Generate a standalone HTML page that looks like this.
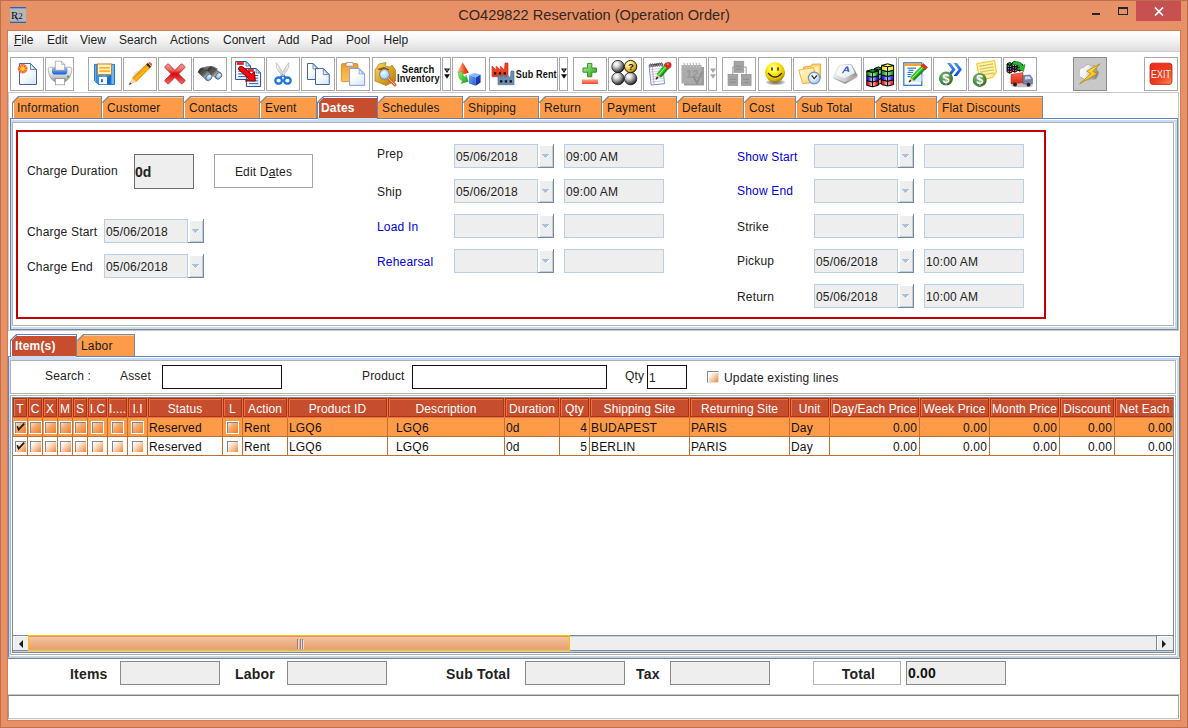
<!DOCTYPE html>
<html lang="en"><head><meta charset="utf-8"><title>CO429822 Reservation (Operation Order)</title>
<style>
*{box-sizing:border-box;margin:0;padding:0}
html,body{width:1188px;height:728px;overflow:hidden;background:#E89166}
body{font-family:"Liberation Sans",Arial,sans-serif;font-size:12px;color:#222;position:relative;letter-spacing:0.18px}
.a{position:absolute}
.t{position:absolute;white-space:nowrap;line-height:14px;height:14px}
#win{position:absolute;left:0;top:0;width:1188px;height:728px;background:#E89166;border:1px solid #B9714E}
#title{position:absolute;left:0;top:5.2px;width:1188px;text-align:center;font-size:14.6px;line-height:20px;color:#33271f;letter-spacing:0px}
#content{position:absolute;left:8px;top:31px;width:1172px;height:689px;background:#fff}
#menubar{position:absolute;left:0;top:0;width:1172px;height:21px;background:linear-gradient(#ffffff 0%,#f2f2f2 50%,#dedede 100%);border-bottom:1px solid #cdcdcd}
#menubar span{position:absolute;top:2px;line-height:14px;color:#222;font-size:12px;letter-spacing:0}
.tb{position:absolute;top:57px;height:34px;border:1px solid #a8a8a8;background:#fff;overflow:hidden}
.tb svg{position:absolute;left:0;top:0}
.tab{position:absolute;height:22px}
.tab svg{position:absolute;left:0;top:0}
.tab span{position:absolute;left:5px;top:5px;line-height:14px;white-space:nowrap;color:#1c1c1c}
.tab.sel span{color:#fff;font-weight:bold;left:4px}
.fld{position:absolute;height:24px;background:#eeeeee;border:1px solid #b8cfe5;line-height:25px;padding-left:1px;color:#222;white-space:nowrap;overflow:hidden}
.dd{position:absolute;width:16px;height:24px;background:#eeeeee;box-shadow:inset -1px -1px 0 #7a8a99,inset 2px 2px 0 #fff,inset -2px -2px 0 #b8cfe5}
.dd:after{content:"";position:absolute;left:7px;top:13px;width:1px;height:1px;background:#a9c1df;box-shadow:-3px -3px 0 #a9c1df,-2px -3px 0 #a9c1df,-1px -3px 0 #a9c1df,0px -3px 0 #a9c1df,1px -3px 0 #a9c1df,2px -3px 0 #a9c1df,3px -3px 0 #a9c1df,-2px -2px 0 #a9c1df,-1px -2px 0 #a9c1df,0px -2px 0 #a9c1df,1px -2px 0 #a9c1df,2px -2px 0 #a9c1df,-1px -1px 0 #a9c1df,0px -1px 0 #a9c1df,1px -1px 0 #a9c1df,3px -2px 0 #fff,2px -1px 0 #fff,1px 0px 0 #fff,0px 1px 0 #fff}
.lbl{position:absolute;white-space:nowrap;line-height:14px;color:#222}
.blue{color:#0000e0}
.gbox{position:absolute;background:#eeeeee;border:1px solid #8a8a8a}
.hc{position:absolute;top:0;height:19px;letter-spacing:0.08px;background:#c64d2e;border:1px solid #9a3a22;box-shadow:inset 1px 1px 0 #ff6b35;color:#fff;text-align:center;line-height:20px;white-space:nowrap;overflow:hidden}
.row{position:absolute;left:0;width:1165px;height:19px;border-bottom:1px solid #c07030}
.cell{position:absolute;top:0;height:18px;line-height:20px;white-space:nowrap;overflow:hidden;border-right:1px solid #c07030;color:#111}
.cb{position:absolute;width:13px;height:13px;border:1px solid #fff;background:linear-gradient(135deg,#ffffff 18%,#fbd3b0 52%,#f0843f 100%);box-shadow:inset 1px 1px 0 #7a8a99}
.cbs{background:linear-gradient(135deg,#fde4cc 5%,#f8a868 45%,#ee7c30 100%)}
.cbp{border-color:#7a8a99 #dde4ec #dde4ec #7a8a99;box-shadow:inset 1px 1px 0 #fff}
</style></head><body>
<div id="win"></div>
<div class="a" style="left:7px;top:30px;width:1174px;height:691px;border:1px solid #cf7c55"></div>
<div class="a" style="left:10px;top:7px;width:16px;height:16px"><svg width="16" height="16" viewBox="0 0 16 16"><rect width="16" height="16" fill="#b4b8bc"/><rect width="16" height="1.3" fill="#2b62b8"/><rect y="14.7" width="16" height="1.3" fill="#2b62b8"/><text x="1" y="11.5" font-family="Liberation Serif,serif" font-size="11" fill="#111">R</text><text x="8.3" y="11.5" font-family="Liberation Serif,serif" font-size="9" fill="#111">2</text><path d="M5 10 L8 13.5" stroke="#111" stroke-width="0.9"/></svg></div>
<div id="title">CO429822 Reservation (Operation Order)</div>
<div class="a" style="left:1092px;top:13px;width:8px;height:2px;background:#1e2630"></div>
<div class="a" style="left:1118px;top:7px;width:10px;height:8px;border:1px solid #1e2630;border-top-width:2px"></div>
<div class="a" style="left:1136px;top:1px;width:45px;height:20px;background:#c75050"></div>
<svg class="a" style="left:1154px;top:7px" width="10" height="9" viewBox="0 0 10 9"><path d="M1 0.5 L9 8.5 M9 0.5 L1 8.5" stroke="#fff" stroke-width="1.7" fill="none"/></svg>
<div id="content">
<div id="menubar"><span style="left:6px"><u>F</u>ile</span><span style="left:39px">Edit</span><span style="left:72px">View</span><span style="left:111px">Search</span><span style="left:162px">Actions</span><span style="left:215px">Convert</span><span style="left:270px">Add</span><span style="left:303px">Pad</span><span style="left:338px">Pool</span><span style="left:375.5px">Help</span></div>
</div>
<div class="a" style="left:8px;top:92px;width:1171px;height:239px;border:1px solid #c6c6c6"></div>
<div class="tb" style="left:10px;width:34px;background:#fff"><svg width="32" height="32" viewBox="0 0 32 32"><defs><linearGradient id="g2" x1="0.2" y1="0" x2="0.8" y2="1"><stop offset="0" stop-color="#ffffff"/><stop offset="0.45" stop-color="#fbfdff"/><stop offset="1" stop-color="#d6e8f8"/></linearGradient></defs><path d="M8.5 5.5 L19.5 5.5 L25.5 11.5 L25.5 26.5 L8.5 26.5 Z" fill="url(#g2)" stroke="#4a6396" stroke-width="1"/><path d="M19.5 5.5 L19.5 11.5 L25.5 11.5 Z" fill="#8fc6ee" stroke="#4a6396" stroke-width="0.7" stroke-linejoin="round"/><path d="M20.1 7.1 L20.1 10.9 L22.9 10.9 Z" fill="#e8f4fc"/><defs><radialGradient id="g1" cx="0.5" cy="0.5" r="0.5"><stop offset="0" stop-color="#ffe838"/><stop offset="0.3" stop-color="#ffc810"/><stop offset="0.5" stop-color="#f85820"/><stop offset="0.8" stop-color="rgba(245,70,40,0.75)"/><stop offset="1" stop-color="rgba(255,90,60,0)"/></radialGradient></defs><circle cx="11.7" cy="10.7" r="5.4" fill="url(#g1)"/><path d="M13.6 11.3 L15.7 11.9" stroke="#ffe060" stroke-width="0.7"/><path d="M12.6 12.5 L13.7 14.4" stroke="#ffe060" stroke-width="0.7"/><path d="M11.1 12.6 L10.5 14.7" stroke="#ffe060" stroke-width="0.7"/><path d="M9.9 11.6 L8.0 12.7" stroke="#ffe060" stroke-width="0.7"/><path d="M9.8 10.1 L7.7 9.5" stroke="#ffe060" stroke-width="0.7"/><path d="M10.8 8.9 L9.7 7.0" stroke="#ffe060" stroke-width="0.7"/><path d="M12.3 8.8 L12.9 6.7" stroke="#ffe060" stroke-width="0.7"/><path d="M13.5 9.8 L15.4 8.7" stroke="#ffe060" stroke-width="0.7"/></svg></div>
<div class="tb" style="left:45px;width:29px;background:#fff"><svg width="27" height="32" viewBox="0 0 27 32"><defs><linearGradient id="g3" x1="0" y1="0" x2="0" y2="1"><stop offset="0" stop-color="#ffffff"/><stop offset="0.35" stop-color="#ececec"/><stop offset="0.7" stop-color="#c4c6c8"/><stop offset="1" stop-color="#7c7e82"/></linearGradient><linearGradient id="g4" x1="0" y1="0" x2="0" y2="1"><stop offset="0" stop-color="#9cc8ff"/><stop offset="0.45" stop-color="#5a98f0"/><stop offset="1" stop-color="#1458d8"/></linearGradient></defs><path d="M2.2 11 Q2 9.3 4 9.2 L24 9.2 Q26 9.3 25.8 11 Q25.5 20 19.5 23.6 L8.5 23.6 Q2.5 20 2.2 11 Z" fill="url(#g3)" stroke="#8c8e92" stroke-width="0.6"/><path d="M6 9.4 L21.4 9.4 L21.4 13.5 Q21.4 16.6 18 16.6 L9.4 16.6 Q6 16.6 6 13.5 Z" fill="url(#g4)"/><rect x="8.6" y="9.4" width="10.6" height="3.6" fill="#8c8ea0"/><path d="M9.3 12.2 L9.3 3.2 L15.4 3.2 L18.7 6.5 L18.7 12.2 Z" fill="#fdfdfd" stroke="#9a9a9a" stroke-width="0.7"/><path d="M15.4 3.2 L15.4 6.5 L18.7 6.5 Z" fill="#e4e4e4" stroke="#9a9a9a" stroke-width="0.5"/><circle cx="22.1" cy="18.7" r="1.1" fill="#22a832"/><rect x="9.3" y="20.6" width="9.4" height="6.2" fill="#ffffff" stroke="#8a8a8a" stroke-width="0.7"/></svg></div>
<div class="tb" style="left:88px;width:34px;background:#fff"><svg width="32" height="32" viewBox="0 0 32 32"><defs><linearGradient id="g5" x1="0" y1="0" x2="1" y2="0"><stop offset="0" stop-color="#bfe4fa"/><stop offset="0.08" stop-color="#2c8ce0"/><stop offset="0.5" stop-color="#4aa8f0"/><stop offset="0.8" stop-color="#1a74d0"/><stop offset="0.93" stop-color="#8fd0f8"/><stop offset="1" stop-color="#1a74d0"/></linearGradient></defs><path d="M5.5 6.4 L25.5 6.4 L25.5 26.5 L9.5 26.5 L5.5 22.8 Z" fill="url(#g5)" stroke="#1670c8" stroke-width="0.9" stroke-linejoin="round"/><rect x="8.5" y="6" width="14" height="10.6" fill="#fff2c4" stroke="#c8862a" stroke-width="1"/><rect x="10.3" y="9" width="10.4" height="1.7" fill="#ffae30"/><rect x="10.3" y="12.3" width="10.4" height="1.7" fill="#ffae30"/><rect x="10" y="19" width="8" height="7.2" fill="#f6fafe"/><rect x="12" y="21.2" width="1.9" height="3" fill="#1a62d0"/><rect x="18.2" y="19" width="2.8" height="7.2" fill="#1568c8"/></svg></div>
<div class="tb" style="left:123px;width:34px;background:#fff"><svg width="32" height="32" viewBox="0 0 32 32"><defs><linearGradient id="g6" x1="0" y1="0" x2="1" y2="1"><stop offset="0" stop-color="rgba(150,150,150,0)"/><stop offset="1" stop-color="rgba(120,120,120,0.55)"/></linearGradient></defs><path d="M5 26.8 L10 14 L16 12 L11 21 Z" fill="url(#g6)"/><path d="M8.4 20.4 L22.8 6 L26.3 9.5 L11.9 23.9 Z" fill="#ffa800"/><path d="M8.7 20.1 L23.1 5.7" stroke="#c87800" stroke-width="0.9"/><path d="M10.6 22.6 L25 8.2" stroke="#ffe070" stroke-width="1" stroke-dasharray="1 0.6"/><path d="M11.8 23.8 L26.2 9.4" stroke="#e89000" stroke-width="0.8"/><path d="M22.2 6.6 L23.8 5 L27.3 8.5 L25.7 10.1 Z" fill="#222"/><path d="M23.8 5 Q25.6 3.4 27.4 5 Q29 6.8 27.3 8.5 Z" fill="#f05828"/><path d="M25.6 6.8 L27 8.2" stroke="#ffd8d0" stroke-width="0.9"/><path d="M8.4 20.4 L11.9 23.9 L4.9 26.9 Z" fill="#f4c8a8"/><path d="M9.6 21.6 L5.8 26" stroke="#fff" stroke-width="0.8" opacity="0.8"/><path d="M4.9 26.9 L6 24.2 L7.7 25.8 Z" fill="#333"/></svg></div>
<div class="tb" style="left:158px;width:34px;background:#fff"><svg width="32" height="32" viewBox="0 0 32 32"><defs><linearGradient id="g7" x1="0" y1="0" x2="0" y2="1"><stop offset="0" stop-color="#f49a9a"/><stop offset="0.3" stop-color="#ec6868"/><stop offset="0.5" stop-color="#d80808"/><stop offset="0.62" stop-color="#e02020"/><stop offset="1" stop-color="#ee6a6a"/></linearGradient></defs><path d="M9.6 6 L15.9 12.3 L22.2 6 Q22.9 5.6 23.5 6.2 L25.7 8.4 Q26.2 9 25.8 9.7 L19.6 15.9 L25.8 22.1 Q26.2 22.8 25.7 23.4 L23.5 25.6 Q22.9 26.2 22.2 25.8 L15.9 19.5 L9.6 25.8 Q8.9 26.2 8.3 25.6 L6.1 23.4 Q5.6 22.8 6 22.1 L12.2 15.9 L6 9.7 Q5.6 9 6.1 8.4 L8.3 6.2 Q8.9 5.6 9.6 6 Z" fill="url(#g7)" stroke="#b82828" stroke-width="0.8" stroke-linejoin="round"/></svg></div>
<div class="tb" style="left:193px;width:34px;background:#fff"><svg width="32" height="32" viewBox="0 0 32 32"><defs><linearGradient id="g8" x1="0" y1="0" x2="1" y2="1"><stop offset="0" stop-color="#3a3a3a"/><stop offset="0.45" stop-color="#5a5a5a"/><stop offset="0.7" stop-color="#c8c8c8"/><stop offset="1" stop-color="#8a8a8a"/></linearGradient><radialGradient id="g9" cx="0.45" cy="0.35" r="0.7"><stop offset="0" stop-color="#e4f2ff"/><stop offset="0.5" stop-color="#a4cdf8"/><stop offset="1" stop-color="#5c98e8"/></radialGradient><linearGradient id="g10" x1="0" y1="0" x2="0" y2="1"><stop offset="0" stop-color="#8c8c8c"/><stop offset="1" stop-color="#3c3c3c"/></linearGradient></defs><path d="M8 9.5 L14 8 L20 8.5 L24 11 L18 14 L10 13 Z" fill="url(#g10)"/><path d="M4.3 14.5 L12.6 22.2 L17.2 16.4 L8.1 9.9 Z" fill="url(#g8)" stroke="#3a3a3a" stroke-width="0.6" stroke-linejoin="round"/><ellipse cx="6.2" cy="12.2" rx="1.3" ry="3.0" transform="rotate(39 6.2 12.2)" fill="#3c3c3c"/><ellipse cx="14.9" cy="19.3" rx="2.7" ry="3.7" transform="rotate(39 14.9 19.3)" fill="url(#g9)" stroke="#4a4a4a" stroke-width="0.7"/><path d="M13.7 13.1 L22.5 20.7 L26.9 15.1 L17.3 8.5 Z" fill="url(#g8)" stroke="#3a3a3a" stroke-width="0.6" stroke-linejoin="round"/><ellipse cx="15.5" cy="10.8" rx="1.3" ry="2.9" transform="rotate(38 15.5 10.8)" fill="#3c3c3c"/><ellipse cx="24.7" cy="17.9" rx="2.7" ry="3.6" transform="rotate(38 24.7 17.9)" fill="url(#g9)" stroke="#4a4a4a" stroke-width="0.7"/></svg></div>
<div class="tb" style="left:231px;width:34px;background:#fff"><svg width="32" height="32" viewBox="0 0 32 32"><defs><linearGradient id="g11" x1="0.2" y1="0" x2="0.8" y2="1"><stop offset="0" stop-color="#ffffff"/><stop offset="0.45" stop-color="#fbfdff"/><stop offset="1" stop-color="#d6e8f8"/></linearGradient></defs><path d="M3.6 3.5 L14.100000000000001 3.5 L18.6 8.0 L18.6 21.5 L3.6 21.5 Z" fill="url(#g11)" stroke="#2a4ea8" stroke-width="1"/><path d="M14.100000000000001 3.5 L14.100000000000001 8.0 L18.6 8.0 Z" fill="#8fc6ee" stroke="#2a4ea8" stroke-width="0.7" stroke-linejoin="round"/><path d="M14.700000000000001 5.1 L14.700000000000001 7.4 L16.0 7.4 Z" fill="#e8f4fc"/><rect x="4.8" y="4.1" width="7.000000000000002" height="2.8" fill="#f02010"/><path d="M6.1 10.5 L16.1 10.5" stroke="#3a5eb8" stroke-width="1"/><path d="M6.1 13.2 L16.1 13.2" stroke="#3a5eb8" stroke-width="1"/><path d="M6.1 15.9 L16.1 15.9" stroke="#3a5eb8" stroke-width="1"/><path d="M6.1 18.6 L16.1 18.6" stroke="#3a5eb8" stroke-width="1"/><defs><linearGradient id="g12" x1="0.2" y1="0" x2="0.8" y2="1"><stop offset="0" stop-color="#ffffff"/><stop offset="0.45" stop-color="#fbfdff"/><stop offset="1" stop-color="#d6e8f8"/></linearGradient></defs><path d="M14.4 10.5 L24.1 10.5 L28.6 15.0 L28.6 28.5 L14.4 28.5 Z" fill="url(#g12)" stroke="#2a4ea8" stroke-width="1"/><path d="M24.1 10.5 L24.1 15.0 L28.6 15.0 Z" fill="#8fc6ee" stroke="#2a4ea8" stroke-width="0.7" stroke-linejoin="round"/><path d="M24.700000000000003 12.1 L24.700000000000003 14.4 L26.0 14.4 Z" fill="#e8f4fc"/><rect x="15.6" y="11.1" width="6.200000000000001" height="2.8" fill="#f02010"/><path d="M16.9 17.5 L26.1 17.5" stroke="#3a5eb8" stroke-width="1"/><path d="M16.9 20.2 L26.1 20.2" stroke="#3a5eb8" stroke-width="1"/><path d="M16.9 22.9 L26.1 22.9" stroke="#3a5eb8" stroke-width="1"/><path d="M16.9 25.6 L26.1 25.6" stroke="#3a5eb8" stroke-width="1"/><path d="M6.4 11.4 Q6 9.6 7.8 8.6 Q9.4 7.8 10.8 9 L19.4 16 L22.4 13.6 L23.4 23 L13.4 23 L16.4 20.2 Z" fill="#f80808" stroke="#6a0000" stroke-width="0.9" stroke-linejoin="round"/></svg></div>
<div class="tb" style="left:266px;width:34px;background:#fff"><svg width="32" height="32" viewBox="0 0 32 32"><defs><linearGradient id="g13" x1="0" y1="0" x2="1" y2="0"><stop offset="0" stop-color="#ffffff"/><stop offset="0.5" stop-color="#dcdcdc"/><stop offset="1" stop-color="#fafafa"/></linearGradient></defs><path d="M9.2 4.8 Q8.2 9.5 12.2 14.2 L16.8 19.6 L18 18 L13.2 10.6 Q11 6.4 9.2 4.8 Z" fill="url(#g13)" stroke="#a4a4a4" stroke-width="0.6"/><path d="M21.8 4.8 Q22.8 9.5 18.8 14.2 L14.2 19.6 L13 18 L17.8 10.6 Q20 6.4 21.8 4.8 Z" fill="url(#g13)" stroke="#a4a4a4" stroke-width="0.6"/><circle cx="15.8" cy="16.6" r="0.8" fill="#9a9a9a"/><ellipse cx="11.6" cy="22.6" rx="3.3" ry="3.1" fill="none" stroke="#1e78dc" stroke-width="2.3"/><ellipse cx="20.4" cy="22.6" rx="3.3" ry="3.1" fill="none" stroke="#1e78dc" stroke-width="2.3"/><path d="M13.4 19.6 L15.4 17.6 M18.6 19.6 L16.6 17.6" stroke="#1e78dc" stroke-width="2"/></svg></div>
<div class="tb" style="left:301px;width:34px;background:#fff"><svg width="32" height="32" viewBox="0 0 32 32"><defs><linearGradient id="g14" x1="0.2" y1="0" x2="0.8" y2="1"><stop offset="0" stop-color="#ffffff"/><stop offset="0.45" stop-color="#fbfdff"/><stop offset="1" stop-color="#d6e8f8"/></linearGradient></defs><path d="M5.5 5.5 L11.0 5.5 L16.5 11.0 L16.5 21.5 L5.5 21.5 Z" fill="url(#g14)" stroke="#4a6396" stroke-width="1"/><path d="M11.0 5.5 L11.0 11.0 L16.5 11.0 Z" fill="#8fc6ee" stroke="#4a6396" stroke-width="0.7" stroke-linejoin="round"/><path d="M11.6 7.1 L11.6 10.4 L13.9 10.4 Z" fill="#e8f4fc"/><defs><linearGradient id="g15" x1="0.2" y1="0" x2="0.8" y2="1"><stop offset="0" stop-color="#ffffff"/><stop offset="0.45" stop-color="#fbfdff"/><stop offset="1" stop-color="#d6e8f8"/></linearGradient></defs><path d="M13.5 10.6 L21.3 10.6 L27.3 16.6 L27.3 26.5 L13.5 26.5 Z" fill="url(#g15)" stroke="#4a6396" stroke-width="1"/><path d="M21.3 10.6 L21.3 16.6 L27.3 16.6 Z" fill="#8fc6ee" stroke="#4a6396" stroke-width="0.7" stroke-linejoin="round"/><path d="M21.900000000000002 12.2 L21.900000000000002 16.0 L24.7 16.0 Z" fill="#e8f4fc"/></svg></div>
<div class="tb" style="left:336px;width:34px;background:#fff"><svg width="32" height="32" viewBox="0 0 32 32"><defs><linearGradient id="g16" x1="0" y1="0" x2="0" y2="1"><stop offset="0" stop-color="#f09a2c"/><stop offset="0.6" stop-color="#ffb444"/><stop offset="1" stop-color="#ffbc58"/></linearGradient></defs><rect x="4.4" y="5.6" width="16.6" height="18" rx="1.2" fill="url(#g16)" stroke="#c0862a" stroke-width="0.8"/><path d="M8.6 8.2 L9.6 4.4 L15.8 4.4 L16.8 8.2 Z" fill="#f6f6f6" stroke="#8a8a8a" stroke-width="0.8" stroke-linejoin="round"/><defs><linearGradient id="g17" x1="0.2" y1="0" x2="0.8" y2="1"><stop offset="0" stop-color="#ffffff"/><stop offset="0.45" stop-color="#fbfdff"/><stop offset="1" stop-color="#d6e8f8"/></linearGradient></defs><path d="M12.6 10.5 L22.1 10.5 L27.6 16.0 L27.6 27.4 L12.6 27.4 Z" fill="url(#g17)" stroke="#8a9ae0" stroke-width="1"/><path d="M22.1 10.5 L22.1 16.0 L27.6 16.0 Z" fill="#8fc6ee" stroke="#8a9ae0" stroke-width="0.7" stroke-linejoin="round"/><path d="M22.700000000000003 12.1 L22.700000000000003 15.4 L25.0 15.4 Z" fill="#e8f4fc"/></svg></div>
<div class="tb" style="left:372px;width:69px;background:#fff"><svg width="67" height="32" viewBox="0 0 67 32"><defs><linearGradient id="g18" x1="0" y1="0" x2="1" y2="1"><stop offset="0" stop-color="#f8d868"/><stop offset="0.5" stop-color="#e0a828"/><stop offset="1" stop-color="#b07810"/></linearGradient><radialGradient id="g19" cx="0.4" cy="0.35" r="0.7"><stop offset="0" stop-color="#f0faff"/><stop offset="0.6" stop-color="#b8dcf0"/><stop offset="1" stop-color="#78b0d8"/></radialGradient></defs><path d="M2 12 L6 6 L13 4.5 L12 8 L17 9 L19 7 L22.5 12 L22.5 23 L13 27.5 L2 23 Z" fill="url(#g18)" stroke="#a87818" stroke-width="0.7"/><path d="M4 11 L11 9 L17 11.5 L10 13.5 Z" fill="#8a5a08"/><path d="M15 20 L22 27" stroke="#e85a28" stroke-width="3" stroke-linecap="round"/><path d="M15 20 L22 27" stroke="#f8c8a8" stroke-width="1" stroke-linecap="round"/><circle cx="11.5" cy="16.5" r="5" fill="url(#g19)" stroke="#8a9098" stroke-width="1.2"/><text x="28.7" y="14.7" textLength="32.7" lengthAdjust="spacingAndGlyphs" font-family="Liberation Sans,Arial,sans-serif" font-weight="bold" font-size="10.5" fill="#111">Search</text><text x="24.1" y="23.7" textLength="42.6" lengthAdjust="spacingAndGlyphs" font-family="Liberation Sans,Arial,sans-serif" font-weight="bold" font-size="10.5" fill="#111">Inventory</text></svg></div>
<div class="tb" style="left:442px;width:9px;background:#fff"><svg width="7" height="32" viewBox="0 0 7 32"><path d="M1 10.5 L7 10.5 L4 15 Z" fill="#111"/><path d="M1 16.2 L7 16.2 L4 20.7 Z" fill="#111"/><path d="M3 11.5 L5 11.5 L4 13 Z" fill="#fff" opacity="0.8"/></svg></div>
<div class="tb" style="left:452px;width:34px;background:#fff"><svg width="32" height="32" viewBox="0 0 32 32"><defs><linearGradient id="g20" x1="0" y1="0" x2="1" y2="0"><stop offset="0" stop-color="#ffc49c"/><stop offset="0.35" stop-color="#fc8a58"/><stop offset="0.7" stop-color="#ee3c1c"/><stop offset="1" stop-color="#d82410"/></linearGradient><linearGradient id="g21" x1="0" y1="0" x2="1" y2="1"><stop offset="0" stop-color="#6aa8f8"/><stop offset="1" stop-color="#2458d0"/></linearGradient><linearGradient id="g22" x1="0" y1="0" x2="1" y2="1"><stop offset="0" stop-color="#a0f080"/><stop offset="0.5" stop-color="#48c838"/><stop offset="1" stop-color="#1c9c20"/></linearGradient><linearGradient id="g23" x1="0" y1="0" x2="0" y2="1"><stop offset="0" stop-color="#2448c0"/><stop offset="1" stop-color="#102c98"/></linearGradient></defs><path d="M9.7 4.3 L15.8 14.6 Q10 18 4 14.6 Z" fill="url(#g20)"/><path d="M16 17 L21.5 15 L27.6 16.6 L22.8 19.6 Z" fill="#86b8fa"/><path d="M16 17 L22.8 19.6 L22.8 27.8 L16 25.4 Z" fill="url(#g21)"/><path d="M22.8 19.6 L27.6 16.6 L27.6 24.6 L22.8 27.8 Z" fill="url(#g23)"/><path d="M5.6 14.4 L9.6 13.2 Q9.4 18.4 12.6 19.6 L13 17 L15.4 23.4 L8 25.4 L9.6 23 Q5 21 5.6 14.4 Z" fill="url(#g22)" stroke="#2aa428" stroke-width="0.5"/></svg></div>
<div class="tb" style="left:489px;width:69px;background:#fff"><svg width="67" height="32" viewBox="0 0 67 32"><path d="M2 18.7 L2 8 L6.2 12 L6.2 8 L10.4 12 L10.4 8 L14.4 12 L15 5 L18 5 L18 18.7 Z" fill="#f04020" stroke="#c82810" stroke-width="0.6" stroke-linejoin="round"/><rect x="4.0" y="14.2" width="2.3" height="2.3" fill="#111"/><rect x="8.8" y="14.2" width="2.3" height="2.3" fill="#111"/><rect x="13.6" y="14.2" width="2.3" height="2.3" fill="#111"/><path d="M8 26.7 L8 16 L12.2 20 L12.2 16 L16.4 20 L16.4 16 L20.4 20 L21 13 L24 13 L24 26.7 Z" fill="#6a90b0" stroke="#486a88" stroke-width="0.6" stroke-linejoin="round"/><rect x="10.0" y="22.2" width="2.3" height="2.3" fill="#111"/><rect x="14.8" y="22.2" width="2.3" height="2.3" fill="#111"/><rect x="19.6" y="22.2" width="2.3" height="2.3" fill="#111"/><text x="25.8" y="19.6" textLength="41" lengthAdjust="spacingAndGlyphs" font-family="Liberation Sans,Arial,sans-serif" font-weight="bold" font-size="10.5" fill="#111">Sub Rent</text></svg></div>
<div class="tb" style="left:559px;width:9px;background:#fff"><svg width="7" height="32" viewBox="0 0 7 32"><path d="M1 10.5 L7 10.5 L4 15 Z" fill="#111"/><path d="M1 16.2 L7 16.2 L4 20.7 Z" fill="#111"/><path d="M3 11.5 L5 11.5 L4 13 Z" fill="#fff" opacity="0.8"/></svg></div>
<div class="tb" style="left:573px;width:34px;background:#fff"><svg width="32" height="32" viewBox="0 0 32 32"><defs><linearGradient id="g24" x1="0" y1="0" x2="1" y2="1"><stop offset="0" stop-color="#e4f8d4"/><stop offset="0.4" stop-color="#7cd060"/><stop offset="1" stop-color="#2c9c24"/></linearGradient><linearGradient id="g25" x1="0" y1="0" x2="0" y2="1"><stop offset="0" stop-color="#ffa888"/><stop offset="1" stop-color="#f04828"/></linearGradient></defs><path d="M13.6 5.4 L17.8 5.4 L17.8 10 L22.4 10 L22.4 14.2 L17.8 14.2 L17.8 18.8 L13.6 18.8 L13.6 14.2 L9 14.2 L9 10 L13.6 10 Z" fill="url(#g24)" stroke="#2a9420" stroke-width="1"/><rect x="8" y="21.4" width="16" height="4.6" fill="url(#g25)"/></svg></div>
<div class="tb" style="left:608px;width:34px;background:#fff"><svg width="32" height="32" viewBox="0 0 32 32"><defs><radialGradient id="g26" cx="0.36" cy="0.3" r="0.8"><stop offset="0" stop-color="#ffffff"/><stop offset="0.25" stop-color="#e0e0e0"/><stop offset="0.55" stop-color="#8c8c8c"/><stop offset="0.85" stop-color="#2c2c2c"/><stop offset="1" stop-color="#000"/></radialGradient><radialGradient id="g27" cx="0.36" cy="0.3" r="0.8"><stop offset="0" stop-color="#ffffe8"/><stop offset="0.35" stop-color="#fce068"/><stop offset="0.75" stop-color="#d09c10"/><stop offset="1" stop-color="#3c2c00"/></radialGradient></defs><circle cx="9" cy="8.6" r="6.2" fill="url(#g26)" stroke="#111" stroke-width="0.8"/><circle cx="9" cy="20.6" r="6.2" fill="url(#g26)" stroke="#111" stroke-width="0.8"/><circle cx="21.6" cy="20.6" r="6.2" fill="url(#g26)" stroke="#111" stroke-width="0.8"/><circle cx="21.6" cy="8.6" r="6.2" fill="url(#g27)" stroke="#111" stroke-width="0.9"/><text x="19.1" y="12" font-family="Liberation Sans,Arial,sans-serif" font-weight="bold" font-size="9.5" fill="#111">?</text></svg></div>
<div class="tb" style="left:643px;width:34px;background:#fff"><svg width="32" height="32" viewBox="0 0 32 32"><g transform="rotate(-6 12 16)"><rect x="6" y="6.5" width="13.5" height="20" fill="#fdfdfd" stroke="#7a82cc" stroke-width="0.9"/><path d="M7 11.0 L19 11.0" stroke="#a8c0f0" stroke-width="0.7"/><path d="M7 13.5 L19 13.5" stroke="#a8c0f0" stroke-width="0.7"/><path d="M7 16.0 L19 16.0" stroke="#a8c0f0" stroke-width="0.7"/><path d="M7 18.5 L19 18.5" stroke="#a8c0f0" stroke-width="0.7"/><path d="M7 21.0 L19 21.0" stroke="#a8c0f0" stroke-width="0.7"/><path d="M7 23.5 L19 23.5" stroke="#a8c0f0" stroke-width="0.7"/><path d="M9 9 L9 26" stroke="#f08080" stroke-width="0.7"/><ellipse cx="7.5" cy="7" rx="0.8" ry="1.6" fill="none" stroke="#222" stroke-width="0.7"/><ellipse cx="9.7" cy="7" rx="0.8" ry="1.6" fill="none" stroke="#222" stroke-width="0.7"/><ellipse cx="11.9" cy="7" rx="0.8" ry="1.6" fill="none" stroke="#222" stroke-width="0.7"/><ellipse cx="14.100000000000001" cy="7" rx="0.8" ry="1.6" fill="none" stroke="#222" stroke-width="0.7"/><ellipse cx="16.3" cy="7" rx="0.8" ry="1.6" fill="none" stroke="#222" stroke-width="0.7"/><ellipse cx="18.5" cy="7" rx="0.8" ry="1.6" fill="none" stroke="#222" stroke-width="0.7"/></g><path d="M12.4 20.6 L17.1 19.3 L12.9 15.8 Z" fill="#e8c078"/><path d="M12.4 20.6 L13.2 19.7" stroke="#222" stroke-width="1.6" stroke-linecap="round"/><path d="M17.1 19.3 L24.3 10.8 L20.2 7.3 L12.9 15.8 Z" fill="#3cc828" stroke="#1e8a1e" stroke-width="0.5"/><path d="M17.1 19.3 L24.3 10.8 L23.0 9.7 L15.7 18.2 Z" fill="#1c8c1c"/><path d="M14.5 17.2 L21.8 8.7" stroke="#a8f090" stroke-width="1"/><path d="M24.6 11.1 L26.6 8.8 L21.8 4.8 L19.9 7.1 Z" fill="#e83020" stroke="#a81808" stroke-width="0.5" stroke-linejoin="round"/><circle cx="24.5" cy="7" r="3" fill="#e02818"/><circle cx="23.8" cy="6.2" r="1" fill="#f89080"/></svg></div>
<div class="tb" style="left:678px;width:29px;background:#fff"><svg width="27" height="32" viewBox="0 0 27 32"><rect x="5" y="9" width="20" height="18.5" fill="#9c9c9c"/><rect x="2.5" y="7" width="20" height="18.5" fill="#acacac"/><path d="M5 5 Q6.5 8 5.5 9.5" stroke="#bcbcbc" stroke-width="1.3" fill="none"/><path d="M8 5 Q9.5 8 8.5 9.5" stroke="#bcbcbc" stroke-width="1.3" fill="none"/><path d="M11 5 Q12.5 8 11.5 9.5" stroke="#bcbcbc" stroke-width="1.3" fill="none"/><path d="M14 5 Q15.5 8 14.5 9.5" stroke="#bcbcbc" stroke-width="1.3" fill="none"/><path d="M17 5 Q18.5 8 17.5 9.5" stroke="#bcbcbc" stroke-width="1.3" fill="none"/><path d="M20 5 Q21.5 8 20.5 9.5" stroke="#bcbcbc" stroke-width="1.3" fill="none"/><text x="7" y="20" font-family="Liberation Sans,Arial,sans-serif" font-weight="bold" font-size="11" fill="#989898">12</text><path d="M14 18 L18 25 L23 14" stroke="#8e8e8e" stroke-width="1.8" fill="none"/></svg></div>
<div class="tb" style="left:708px;width:9px;background:#fff"><svg width="7" height="32" viewBox="0 0 7 32"><path d="M1 10.5 L7 10.5 L4 15 Z" fill="#a8a8a8"/><path d="M1 16.2 L7 16.2 L4 20.7 Z" fill="#a8a8a8"/></svg></div>
<div class="tb" style="left:722px;width:34px;background:#fff"><svg width="32" height="32" viewBox="0 0 32 32"><path d="M16 9 L9.8 9 L9.8 16 M16 9 L23.2 9 L23.2 16" stroke="#9a9a9a" stroke-width="1" fill="none"/><rect x="11" y="3.2" width="9.8" height="11.2" fill="#a4a4a4" stroke="#8c8c8c" stroke-width="0.6"/><path d="M12.9 8.2 h6 M12.9 11.2 h6" stroke="#8a8a8a" stroke-width="1"/><rect x="5" y="16.3" width="9.8" height="11.2" fill="#a4a4a4" stroke="#8c8c8c" stroke-width="0.6"/><path d="M6.9 21.3 h6 M6.9 24.3 h6" stroke="#8a8a8a" stroke-width="1"/><rect x="18.3" y="16.3" width="9.8" height="11.2" fill="#a4a4a4" stroke="#8c8c8c" stroke-width="0.6"/><path d="M20.2 21.3 h6 M20.2 24.3 h6" stroke="#8a8a8a" stroke-width="1"/></svg></div>
<div class="tb" style="left:758px;width:34px;background:#fff"><svg width="32" height="32" viewBox="0 0 32 32"><defs><radialGradient id="g28" cx="0.42" cy="0.3" r="0.78"><stop offset="0" stop-color="#ffffd8"/><stop offset="0.3" stop-color="#fff428"/><stop offset="0.7" stop-color="#e0c000"/><stop offset="0.92" stop-color="#8c7400"/><stop offset="1" stop-color="#5c4c00"/></radialGradient><radialGradient id="g29" cx="0.5" cy="0.5" r="0.5"><stop offset="0" stop-color="rgba(50,30,0,0.7)"/><stop offset="0.6" stop-color="rgba(60,40,0,0.4)"/><stop offset="1" stop-color="rgba(60,40,0,0)"/></radialGradient></defs><ellipse cx="16.5" cy="24.2" rx="10.5" ry="3.4" fill="url(#g29)"/><circle cx="16" cy="14.3" r="10" fill="url(#g28)"/><ellipse cx="13" cy="11" rx="0.8" ry="1.9" fill="#3a2a00"/><ellipse cx="19" cy="11" rx="0.8" ry="1.9" fill="#3a2a00"/><path d="M9.4 15.4 Q16 22.8 22.6 15.4" stroke="#2a1a00" stroke-width="1.3" fill="none" stroke-linecap="round"/></svg></div>
<div class="tb" style="left:793px;width:34px;background:#fff"><svg width="32" height="32" viewBox="0 0 32 32"><defs><linearGradient id="g30" x1="0" y1="0" x2="1" y2="1"><stop offset="0" stop-color="#fffbe0"/><stop offset="0.6" stop-color="#fde48c"/><stop offset="1" stop-color="#f8c448"/></linearGradient><radialGradient id="g31" cx="0.4" cy="0.35" r="0.7"><stop offset="0" stop-color="#ffffff"/><stop offset="0.6" stop-color="#cfe4fa"/><stop offset="1" stop-color="#8cb4e4"/></radialGradient></defs><path d="M9.5 9 L17 8 L18 6.2 L26.6 6 L26.6 20 L11 23 Z" fill="#fcd670" stroke="#e89a18" stroke-width="0.8" stroke-linejoin="round"/><path d="M13 10 L24.5 8.5 L24.5 20 L13 22 Z" fill="#fff4c0"/><path d="M4.8 12 L19.6 9.6 L23.4 24.2 L8.6 25.6 Z" fill="url(#g30)" stroke="#eca428" stroke-width="0.8" stroke-linejoin="round"/><circle cx="20.2" cy="20" r="5.8" fill="url(#g31)" stroke="#7890b8" stroke-width="1.2"/><path d="M17.6 17.4 L20.2 20.6 L23 17.4" stroke="#222" stroke-width="1.2" fill="none"/></svg></div>
<div class="tb" style="left:828px;width:34px;background:#fff"><svg width="32" height="32" viewBox="0 0 32 32"><defs><linearGradient id="g32" x1="0" y1="0" x2="1" y2="1"><stop offset="0" stop-color="#ffffff"/><stop offset="0.6" stop-color="#f4f4f4"/><stop offset="1" stop-color="#dcdcdc"/></linearGradient><linearGradient id="g33" x1="0" y1="0" x2="1" y2="0"><stop offset="0" stop-color="#f0f0f0"/><stop offset="0.6" stop-color="#c4c4c4"/><stop offset="1" stop-color="#8c8c8c"/></linearGradient><linearGradient id="g34" x1="0" y1="0" x2="0" y2="1"><stop offset="0" stop-color="#c8c8c8"/><stop offset="1" stop-color="#8a8a8a"/></linearGradient></defs><path d="M3.8 18.5 L9.5 8 Q10 7 11.5 6.8 L21 6 Q22.5 6 23.2 7.2 L28.4 17 Q28.8 18.6 27.6 19.4 L17 25.4 Q16 26 14.8 25.4 L4.6 20.4 Q3.4 19.6 3.8 18.5 Z" fill="url(#g33)"/><path d="M4.2 19.4 L15.8 24.2 L28.2 17.6 L28 19 L16.2 25.7 L4.6 20.6 Z" fill="url(#g34)"/><path d="M10.2 8.4 Q10.6 7.6 11.6 7.5 L20.8 6.8 Q22 6.8 22.4 7.6 L25.8 15 L15.4 20.2 L6.8 16.6 Z" fill="url(#g32)"/><text x="0" y="0" transform="translate(12.2 15.6) rotate(-14) skewX(-28) scale(1.25 0.82)" font-family="Liberation Sans,Arial,sans-serif" font-weight="bold" font-size="9.5" fill="#1e60e0">A</text></svg></div>
<div class="tb" style="left:863px;width:34px;background:#fff"><svg width="32" height="32" viewBox="0 0 32 32"><defs><linearGradient id="g35" x1="0" y1="0" x2="1" y2="0"><stop offset="0" stop-color="#f02828"/><stop offset="0.3" stop-color="#f02828"/><stop offset="1" stop-color="#ffd0d0"/></linearGradient><linearGradient id="g36" x1="0" y1="0" x2="1" y2="0"><stop offset="0" stop-color="#ffd0d0"/><stop offset="0.7" stop-color="#f02828"/><stop offset="1" stop-color="#f02828"/></linearGradient></defs><path d="M10.5 20.1 L14.5 21.5 L14.5 26.3 L10.5 24.900000000000002 Z" fill="url(#g35)" stroke="#050505" stroke-width="1" stroke-linejoin="round"/><path d="M14.5 21.5 L18.5 20.1 L18.5 24.900000000000002 L14.5 26.3 Z" fill="url(#g36)" stroke="#050505" stroke-width="1" stroke-linejoin="round"/><defs><linearGradient id="g37" x1="0" y1="0" x2="1" y2="0"><stop offset="0" stop-color="#2030e8"/><stop offset="0.3" stop-color="#2030e8"/><stop offset="1" stop-color="#d0d8ff"/></linearGradient><linearGradient id="g38" x1="0" y1="0" x2="1" y2="0"><stop offset="0" stop-color="#d0d8ff"/><stop offset="0.7" stop-color="#2030e8"/><stop offset="1" stop-color="#2030e8"/></linearGradient></defs><path d="M10.5 15.3 L14.5 16.7 L14.5 21.5 L10.5 20.1 Z" fill="url(#g37)" stroke="#050505" stroke-width="1" stroke-linejoin="round"/><path d="M14.5 16.7 L18.5 15.3 L18.5 20.1 L14.5 21.5 Z" fill="url(#g38)" stroke="#050505" stroke-width="1" stroke-linejoin="round"/><defs><linearGradient id="g39" x1="0" y1="0" x2="1" y2="0"><stop offset="0" stop-color="#18a828"/><stop offset="0.3" stop-color="#18a828"/><stop offset="1" stop-color="#b8f0c0"/></linearGradient><linearGradient id="g40" x1="0" y1="0" x2="1" y2="0"><stop offset="0" stop-color="#b8f0c0"/><stop offset="0.7" stop-color="#18a828"/><stop offset="1" stop-color="#18a828"/></linearGradient></defs><path d="M10.5 10.5 L14.5 11.9 L14.5 16.7 L10.5 15.3 Z" fill="url(#g39)" stroke="#050505" stroke-width="1" stroke-linejoin="round"/><path d="M14.5 11.9 L18.5 10.5 L18.5 15.3 L14.5 16.7 Z" fill="url(#g40)" stroke="#050505" stroke-width="1" stroke-linejoin="round"/><path d="M10.5 10.5 L14.5 8.9 L18.5 10.5 L14.5 11.9 Z" fill="#109818" stroke="#050505" stroke-width="1" stroke-linejoin="round"/><defs><linearGradient id="g43" x1="0" y1="0" x2="1" y2="0"><stop offset="0" stop-color="#f02828"/><stop offset="0.3" stop-color="#f02828"/><stop offset="1" stop-color="#ffd0d0"/></linearGradient><linearGradient id="g44" x1="0" y1="0" x2="1" y2="0"><stop offset="0" stop-color="#ffd0d0"/><stop offset="0.7" stop-color="#f02828"/><stop offset="1" stop-color="#f02828"/></linearGradient></defs><path d="M2.8 22.6 L8.5 24.0 L8.5 28.8 L2.8 27.400000000000002 Z" fill="url(#g43)" stroke="#050505" stroke-width="1" stroke-linejoin="round"/><path d="M8.5 24.0 L14.2 22.6 L14.2 27.400000000000002 L8.5 28.8 Z" fill="url(#g44)" stroke="#050505" stroke-width="1" stroke-linejoin="round"/><defs><linearGradient id="g45" x1="0" y1="0" x2="1" y2="0"><stop offset="0" stop-color="#2030e8"/><stop offset="0.3" stop-color="#2030e8"/><stop offset="1" stop-color="#d0d8ff"/></linearGradient><linearGradient id="g46" x1="0" y1="0" x2="1" y2="0"><stop offset="0" stop-color="#d0d8ff"/><stop offset="0.7" stop-color="#2030e8"/><stop offset="1" stop-color="#2030e8"/></linearGradient></defs><path d="M2.8 17.8 L8.5 19.2 L8.5 24.0 L2.8 22.6 Z" fill="url(#g45)" stroke="#050505" stroke-width="1" stroke-linejoin="round"/><path d="M8.5 19.2 L14.2 17.8 L14.2 22.6 L8.5 24.0 Z" fill="url(#g46)" stroke="#050505" stroke-width="1" stroke-linejoin="round"/><defs><linearGradient id="g47" x1="0" y1="0" x2="1" y2="0"><stop offset="0" stop-color="#18a828"/><stop offset="0.3" stop-color="#18a828"/><stop offset="1" stop-color="#b8f0c0"/></linearGradient><linearGradient id="g48" x1="0" y1="0" x2="1" y2="0"><stop offset="0" stop-color="#b8f0c0"/><stop offset="0.7" stop-color="#18a828"/><stop offset="1" stop-color="#18a828"/></linearGradient></defs><path d="M2.8 13.0 L8.5 14.4 L8.5 19.2 L2.8 17.8 Z" fill="url(#g47)" stroke="#050505" stroke-width="1" stroke-linejoin="round"/><path d="M8.5 14.4 L14.2 13.0 L14.2 17.8 L8.5 19.2 Z" fill="url(#g48)" stroke="#050505" stroke-width="1" stroke-linejoin="round"/><path d="M2.8 13 L8.5 11.4 L14.2 13 L8.5 14.4 Z" fill="#109818" stroke="#050505" stroke-width="1" stroke-linejoin="round"/><defs><linearGradient id="g51" x1="0" y1="0" x2="1" y2="0"><stop offset="0" stop-color="#f02828"/><stop offset="0.3" stop-color="#f02828"/><stop offset="1" stop-color="#ffd0d0"/></linearGradient><linearGradient id="g52" x1="0" y1="0" x2="1" y2="0"><stop offset="0" stop-color="#ffd0d0"/><stop offset="0.7" stop-color="#f02828"/><stop offset="1" stop-color="#f02828"/></linearGradient></defs><path d="M17.6 21.799999999999997 L23.6 23.199999999999996 L23.6 27.999999999999996 L17.6 26.599999999999998 Z" fill="url(#g51)" stroke="#050505" stroke-width="1" stroke-linejoin="round"/><path d="M23.6 23.199999999999996 L29.6 21.799999999999997 L29.6 26.599999999999998 L23.6 27.999999999999996 Z" fill="url(#g52)" stroke="#050505" stroke-width="1" stroke-linejoin="round"/><defs><linearGradient id="g53" x1="0" y1="0" x2="1" y2="0"><stop offset="0" stop-color="#2030e8"/><stop offset="0.3" stop-color="#2030e8"/><stop offset="1" stop-color="#d0d8ff"/></linearGradient><linearGradient id="g54" x1="0" y1="0" x2="1" y2="0"><stop offset="0" stop-color="#d0d8ff"/><stop offset="0.7" stop-color="#2030e8"/><stop offset="1" stop-color="#2030e8"/></linearGradient></defs><path d="M17.6 17.0 L23.6 18.4 L23.6 23.2 L17.6 21.8 Z" fill="url(#g53)" stroke="#050505" stroke-width="1" stroke-linejoin="round"/><path d="M23.6 18.4 L29.6 17.0 L29.6 21.8 L23.6 23.2 Z" fill="url(#g54)" stroke="#050505" stroke-width="1" stroke-linejoin="round"/><defs><linearGradient id="g55" x1="0" y1="0" x2="1" y2="0"><stop offset="0" stop-color="#18a828"/><stop offset="0.3" stop-color="#18a828"/><stop offset="1" stop-color="#b8f0c0"/></linearGradient><linearGradient id="g56" x1="0" y1="0" x2="1" y2="0"><stop offset="0" stop-color="#b8f0c0"/><stop offset="0.7" stop-color="#18a828"/><stop offset="1" stop-color="#18a828"/></linearGradient></defs><path d="M17.6 12.2 L23.6 13.6 L23.6 18.4 L17.6 17.0 Z" fill="url(#g55)" stroke="#050505" stroke-width="1" stroke-linejoin="round"/><path d="M23.6 13.6 L29.6 12.2 L29.6 17.0 L23.6 18.4 Z" fill="url(#g56)" stroke="#050505" stroke-width="1" stroke-linejoin="round"/><defs><linearGradient id="g57" x1="0" y1="0" x2="1" y2="0"><stop offset="0" stop-color="#f0e820"/><stop offset="0.3" stop-color="#f0e820"/><stop offset="1" stop-color="#ffffc0"/></linearGradient><linearGradient id="g58" x1="0" y1="0" x2="1" y2="0"><stop offset="0" stop-color="#ffffc0"/><stop offset="0.7" stop-color="#f0e820"/><stop offset="1" stop-color="#f0e820"/></linearGradient></defs><path d="M17.6 7.4 L23.6 8.8 L23.6 13.600000000000001 L17.6 12.2 Z" fill="url(#g57)" stroke="#050505" stroke-width="1" stroke-linejoin="round"/><path d="M23.6 8.8 L29.6 7.4 L29.6 12.2 L23.6 13.600000000000001 Z" fill="url(#g58)" stroke="#050505" stroke-width="1" stroke-linejoin="round"/><path d="M17.6 7.4 L23.6 5.800000000000001 L29.6 7.4 L23.6 8.8 Z" fill="#f8f060" stroke="#050505" stroke-width="1" stroke-linejoin="round"/></svg></div>
<div class="tb" style="left:898px;width:34px;background:#fff"><svg width="32" height="32" viewBox="0 0 32 32"><rect x="4.8" y="4.8" width="18" height="22.5" fill="#fbfcfe" stroke="#2474c4" stroke-width="1.2"/><rect x="5.3" y="5.3" width="17" height="2.6" fill="#f8a030"/><path d="M8.5 10.2 h8.5" stroke="#2474c4" stroke-width="1.1"/><path d="M9.5 12.299999999999999 h5" stroke="#2474c4" stroke-width="1.1"/><path d="M8.5 14.399999999999999 h5.5" stroke="#2474c4" stroke-width="1.1"/><path d="M8.5 16.5 h4" stroke="#2474c4" stroke-width="1.1"/><path d="M8.5 18.6 h3" stroke="#2474c4" stroke-width="1.1"/><path d="M10 24 L14 17 L26 17 L22 24 Z" fill="#d0e0f4" opacity="0.7"/><path d="M10.5 23.5 L15.1 22.4 L11.6 18.9 Z" fill="#e8c078"/><path d="M10.5 23.5 L11.3 22.7" stroke="#222" stroke-width="1.6" stroke-linecap="round"/><path d="M15.1 22.4 L26.1 11.4 L22.6 7.9 L11.6 18.9 Z" fill="#3cc828" stroke="#1e8a1e" stroke-width="0.5"/><path d="M15.1 22.4 L26.1 11.4 L25.0 10.2 L13.9 21.3 Z" fill="#1c8c1c"/><path d="M12.9 20.2 L24.0 9.2" stroke="#a8f090" stroke-width="1"/><path d="M26.4 11.7 L28.5 9.5 L24.5 5.5 L22.3 7.6 Z" fill="#e83020" stroke="#a81808" stroke-width="0.5" stroke-linejoin="round"/></svg></div>
<div class="tb" style="left:933px;width:34px;background:#fff"><svg width="32" height="32" viewBox="0 0 32 32"><defs><linearGradient id="g61" x1="0" y1="0" x2="0" y2="1"><stop offset="0" stop-color="#4a98f8"/><stop offset="1" stop-color="#0848c8"/></linearGradient></defs><path d="M13 5 L16.5 5 L21.5 11.5 L16.5 18 L13 18 L18 11.5 Z" fill="url(#g61)"/><path d="M19.5 5 L23.0 5 L28.0 11.5 L23.0 18 L19.5 18 L24.5 11.5 Z" fill="url(#g61)"/><defs><radialGradient id="g62" cx="0.4" cy="0.35" r="0.75"><stop offset="0" stop-color="#88b878"/><stop offset="0.6" stop-color="#4a8a42"/><stop offset="1" stop-color="#2a5a28"/></radialGradient></defs><circle cx="12" cy="20.6" r="7" fill="url(#g62)"/><text x="12" y="25.0" text-anchor="middle" font-family="Liberation Sans,Arial,sans-serif" font-weight="bold" font-size="12.5" fill="#fff">$</text></svg></div>
<div class="tb" style="left:968px;width:34px;background:#fff"><svg width="32" height="32" viewBox="0 0 32 32"><g transform="rotate(-10 18 12)"><path d="M9 4 L27 4 L27 16 L22.5 20.5 L9 20.5 Z" fill="#fff4a0" stroke="#f0c020" stroke-width="0.9"/><path d="M27 16 L22.5 16 L22.5 20.5 Z" fill="#f8dc60"/><path d="M11 7 h14" stroke="#d8c070" stroke-width="1.2"/><path d="M11 10 h14" stroke="#d8c070" stroke-width="1.2"/><path d="M11 13 h14" stroke="#d8c070" stroke-width="1.2"/><path d="M11 16 h14" stroke="#d8c070" stroke-width="1.2"/></g><defs><radialGradient id="g63" cx="0.4" cy="0.35" r="0.75"><stop offset="0" stop-color="#88b878"/><stop offset="0.6" stop-color="#4a8a42"/><stop offset="1" stop-color="#2a5a28"/></radialGradient></defs><circle cx="10.7" cy="21.9" r="7" fill="url(#g63)"/><text x="10.7" y="26.299999999999997" text-anchor="middle" font-family="Liberation Sans,Arial,sans-serif" font-weight="bold" font-size="12.5" fill="#fff">$</text></svg></div>
<div class="tb" style="left:1003px;width:34px;background:#fff"><svg width="32" height="32" viewBox="0 0 32 32"><defs><linearGradient id="g64" x1="0" y1="0" x2="0" y2="1"><stop offset="0" stop-color="#f86850"/><stop offset="1" stop-color="#d82818"/></linearGradient></defs><defs><linearGradient id="g65" x1="0" y1="0" x2="1" y2="0"><stop offset="0" stop-color="#f02828"/><stop offset="0.3" stop-color="#f02828"/><stop offset="1" stop-color="#ffd0d0"/></linearGradient><linearGradient id="g66" x1="0" y1="0" x2="1" y2="0"><stop offset="0" stop-color="#ffd0d0"/><stop offset="0.7" stop-color="#f02828"/><stop offset="1" stop-color="#f02828"/></linearGradient></defs><path d="M3 11.2 L5.7 12.6 L5.7 15.2 L3 13.799999999999999 Z" fill="url(#g65)" stroke="#050505" stroke-width="1" stroke-linejoin="round"/><path d="M5.7 12.6 L8.4 11.2 L8.4 13.799999999999999 L5.7 15.2 Z" fill="url(#g66)" stroke="#050505" stroke-width="1" stroke-linejoin="round"/><defs><linearGradient id="g67" x1="0" y1="0" x2="1" y2="0"><stop offset="0" stop-color="#2030e8"/><stop offset="0.3" stop-color="#2030e8"/><stop offset="1" stop-color="#d0d8ff"/></linearGradient><linearGradient id="g68" x1="0" y1="0" x2="1" y2="0"><stop offset="0" stop-color="#d0d8ff"/><stop offset="0.7" stop-color="#2030e8"/><stop offset="1" stop-color="#2030e8"/></linearGradient></defs><path d="M3 8.6 L5.7 10.0 L5.7 12.6 L3 11.2 Z" fill="url(#g67)" stroke="#050505" stroke-width="1" stroke-linejoin="round"/><path d="M5.7 10.0 L8.4 8.6 L8.4 11.2 L5.7 12.6 Z" fill="url(#g68)" stroke="#050505" stroke-width="1" stroke-linejoin="round"/><defs><linearGradient id="g69" x1="0" y1="0" x2="1" y2="0"><stop offset="0" stop-color="#18a828"/><stop offset="0.3" stop-color="#18a828"/><stop offset="1" stop-color="#b8f0c0"/></linearGradient><linearGradient id="g70" x1="0" y1="0" x2="1" y2="0"><stop offset="0" stop-color="#b8f0c0"/><stop offset="0.7" stop-color="#18a828"/><stop offset="1" stop-color="#18a828"/></linearGradient></defs><path d="M3 6.0 L5.7 7.4 L5.7 10.0 L3 8.6 Z" fill="url(#g69)" stroke="#050505" stroke-width="1" stroke-linejoin="round"/><path d="M5.7 7.4 L8.4 6.0 L8.4 8.6 L5.7 10.0 Z" fill="url(#g70)" stroke="#050505" stroke-width="1" stroke-linejoin="round"/><path d="M3 6 L5.7 4.4 L8.4 6 L5.7 7.4 Z" fill="#109818" stroke="#050505" stroke-width="1" stroke-linejoin="round"/><defs><linearGradient id="g73" x1="0" y1="0" x2="1" y2="0"><stop offset="0" stop-color="#f02828"/><stop offset="0.3" stop-color="#f02828"/><stop offset="1" stop-color="#ffd0d0"/></linearGradient><linearGradient id="g74" x1="0" y1="0" x2="1" y2="0"><stop offset="0" stop-color="#ffd0d0"/><stop offset="0.7" stop-color="#f02828"/><stop offset="1" stop-color="#f02828"/></linearGradient></defs><path d="M8 10.2 L10.7 11.6 L10.7 14.2 L8 12.799999999999999 Z" fill="url(#g73)" stroke="#050505" stroke-width="1" stroke-linejoin="round"/><path d="M10.7 11.6 L13.4 10.2 L13.4 12.799999999999999 L10.7 14.2 Z" fill="url(#g74)" stroke="#050505" stroke-width="1" stroke-linejoin="round"/><defs><linearGradient id="g75" x1="0" y1="0" x2="1" y2="0"><stop offset="0" stop-color="#2030e8"/><stop offset="0.3" stop-color="#2030e8"/><stop offset="1" stop-color="#d0d8ff"/></linearGradient><linearGradient id="g76" x1="0" y1="0" x2="1" y2="0"><stop offset="0" stop-color="#d0d8ff"/><stop offset="0.7" stop-color="#2030e8"/><stop offset="1" stop-color="#2030e8"/></linearGradient></defs><path d="M8 7.6 L10.7 9.0 L10.7 11.6 L8 10.2 Z" fill="url(#g75)" stroke="#050505" stroke-width="1" stroke-linejoin="round"/><path d="M10.7 9.0 L13.4 7.6 L13.4 10.2 L10.7 11.6 Z" fill="url(#g76)" stroke="#050505" stroke-width="1" stroke-linejoin="round"/><defs><linearGradient id="g77" x1="0" y1="0" x2="1" y2="0"><stop offset="0" stop-color="#f0e820"/><stop offset="0.3" stop-color="#f0e820"/><stop offset="1" stop-color="#ffffc0"/></linearGradient><linearGradient id="g78" x1="0" y1="0" x2="1" y2="0"><stop offset="0" stop-color="#ffffc0"/><stop offset="0.7" stop-color="#f0e820"/><stop offset="1" stop-color="#f0e820"/></linearGradient></defs><path d="M8 5.0 L10.7 6.4 L10.7 9.0 L8 7.6 Z" fill="url(#g77)" stroke="#050505" stroke-width="1" stroke-linejoin="round"/><path d="M10.7 6.4 L13.4 5.0 L13.4 7.6 L10.7 9.0 Z" fill="url(#g78)" stroke="#050505" stroke-width="1" stroke-linejoin="round"/><path d="M8 5 L10.7 3.4 L13.4 5 L10.7 6.4 Z" fill="#f8f060" stroke="#050505" stroke-width="1" stroke-linejoin="round"/><defs><linearGradient id="g81" x1="0" y1="0" x2="1" y2="0"><stop offset="0" stop-color="#f02828"/><stop offset="0.3" stop-color="#f02828"/><stop offset="1" stop-color="#ffd0d0"/></linearGradient><linearGradient id="g82" x1="0" y1="0" x2="1" y2="0"><stop offset="0" stop-color="#ffd0d0"/><stop offset="0.7" stop-color="#f02828"/><stop offset="1" stop-color="#f02828"/></linearGradient></defs><path d="M13 9.1 L15.7 10.5 L15.7 13.1 L13 11.7 Z" fill="url(#g81)" stroke="#050505" stroke-width="1" stroke-linejoin="round"/><path d="M15.7 10.5 L18.4 9.1 L18.4 11.7 L15.7 13.1 Z" fill="url(#g82)" stroke="#050505" stroke-width="1" stroke-linejoin="round"/><defs><linearGradient id="g83" x1="0" y1="0" x2="1" y2="0"><stop offset="0" stop-color="#18a828"/><stop offset="0.3" stop-color="#18a828"/><stop offset="1" stop-color="#b8f0c0"/></linearGradient><linearGradient id="g84" x1="0" y1="0" x2="1" y2="0"><stop offset="0" stop-color="#b8f0c0"/><stop offset="0.7" stop-color="#18a828"/><stop offset="1" stop-color="#18a828"/></linearGradient></defs><path d="M13 6.5 L15.7 7.9 L15.7 10.5 L13 9.1 Z" fill="url(#g83)" stroke="#050505" stroke-width="1" stroke-linejoin="round"/><path d="M15.7 7.9 L18.4 6.5 L18.4 9.1 L15.7 10.5 Z" fill="url(#g84)" stroke="#050505" stroke-width="1" stroke-linejoin="round"/><path d="M13 6.5 L15.7 4.9 L18.4 6.5 L15.7 7.9 Z" fill="#109818" stroke="#050505" stroke-width="1" stroke-linejoin="round"/><path d="M9 4 Q16 2 18.5 7.5 L21 6.5 L19.5 13.5 L13.5 10.5 L16 9.5 Q14 6 9 6.5 Z" fill="#28b838" stroke="#0a7a18" stroke-width="0.6"/><ellipse cx="18" cy="27.5" rx="11" ry="1.8" fill="#000" opacity="0.25"/><path d="M7 16.5 L19 14.5 L19 25 L7 26 Z" fill="url(#g64)" stroke="#b02010" stroke-width="0.5"/><path d="M19 17.5 L26 17 L28.5 20.5 L28.5 26 L19 26 Z" fill="#7a82a8" stroke="#4a5278" stroke-width="0.5"/><path d="M21 18.5 L25.5 18.2 L27.3 21 L21 21.5 Z" fill="#c8d8f0"/><circle cx="11" cy="26.5" r="2" fill="#222"/><circle cx="24.5" cy="26.8" r="2" fill="#222"/></svg></div>
<div class="tb" style="left:1073px;width:34px;background:#c8c8c8;border-color:#8a8a8a"><svg width="32" height="32" viewBox="0 0 32 32"><defs><linearGradient id="g87" x1="0" y1="0" x2="1" y2="0.3"><stop offset="0" stop-color="#ffffff"/><stop offset="0.45" stop-color="#f2f2f2"/><stop offset="0.75" stop-color="#b4b4b4"/><stop offset="1" stop-color="#8c8c8c"/></linearGradient><linearGradient id="g88" x1="0" y1="0" x2="1" y2="1"><stop offset="0" stop-color="#fff27a"/><stop offset="0.5" stop-color="#ffd020"/><stop offset="1" stop-color="#f0a000"/></linearGradient></defs><path d="M8.6 20 Q4.2 19.4 5.6 14.6 Q4.8 9.6 10 9.4 Q12.4 5 17.4 7.6 Q22.8 6.4 23 11.8 Q26.2 14.2 23.4 18.4 Q22.4 22.2 17 21 Q12.4 23.8 8.6 20 Z" fill="url(#g87)" stroke="#9c9c9c" stroke-width="0.5"/><path d="M26 5.8 L12.6 13.2 L17 15.6 L5.6 25.8 L23.4 15.8 L19 13.4 Z" fill="url(#g88)" stroke="#a87c00" stroke-width="0.7" stroke-linejoin="round"/></svg></div>
<div class="tb" style="left:1144px;width:34px;background:#fff"><svg width="32" height="32" viewBox="0 0 32 32"><defs><linearGradient id="g89" x1="0" y1="0" x2="1" y2="1"><stop offset="0" stop-color="#f02c20"/><stop offset="0.55" stop-color="#ec3c20"/><stop offset="1" stop-color="#fa8c50"/></linearGradient></defs><rect x="5" y="5.2" width="22" height="21.2" rx="2.8" fill="url(#g89)" stroke="#c01c0c" stroke-width="0.8"/><text x="6" y="19.7" textLength="20" lengthAdjust="spacingAndGlyphs" font-family="Liberation Sans,Arial,sans-serif" font-size="10" fill="#fff">EXIT</text></svg></div>
<div class="tab" style="left:12px;top:96px;width:90px"><svg width="90" height="22" shape-rendering="crispEdges"><path d="M0 22 L0 6 L6 0 L90 0 L90 22 Z" fill="#fd9b48"/><path d="M7 1.5 L89 1.5" fill="none" stroke="#fdc79c" stroke-width="1"/><path d="M0.5 22 L0.5 6.5" fill="none" stroke="#7a8a99" stroke-width="1"/><path d="M1.5 22 L1.5 6.5" fill="none" stroke="#fff" stroke-width="1"/><path d="M6 0.5 L89.5 0.5 L89.5 22" fill="none" stroke="#7a8a99" stroke-width="1"/><path d="M0.5 6.5 L6.5 0.5" fill="none" stroke="#7a8a99" stroke-width="1.2" shape-rendering="auto"/></svg><span>Information</span></div>
<div class="tab" style="left:102px;top:96px;width:82px"><svg width="82" height="22" shape-rendering="crispEdges"><path d="M0 22 L0 6 L6 0 L82 0 L82 22 Z" fill="#fd9b48"/><path d="M7 1.5 L81 1.5" fill="none" stroke="#fdc79c" stroke-width="1"/><path d="M0.5 22 L0.5 6.5" fill="none" stroke="#fff" stroke-width="1"/><path d="M6 0.5 L81.5 0.5 L81.5 22" fill="none" stroke="#7a8a99" stroke-width="1"/><path d="M0.5 6.5 L6.5 0.5" fill="none" stroke="#7a8a99" stroke-width="1.2" shape-rendering="auto"/></svg><span>Customer</span></div>
<div class="tab" style="left:184px;top:96px;width:76px"><svg width="76" height="22" shape-rendering="crispEdges"><path d="M0 22 L0 6 L6 0 L76 0 L76 22 Z" fill="#fd9b48"/><path d="M7 1.5 L75 1.5" fill="none" stroke="#fdc79c" stroke-width="1"/><path d="M0.5 22 L0.5 6.5" fill="none" stroke="#fff" stroke-width="1"/><path d="M6 0.5 L75.5 0.5 L75.5 22" fill="none" stroke="#7a8a99" stroke-width="1"/><path d="M0.5 6.5 L6.5 0.5" fill="none" stroke="#7a8a99" stroke-width="1.2" shape-rendering="auto"/></svg><span>Contacts</span></div>
<div class="tab" style="left:260px;top:96px;width:57px"><svg width="57" height="22" shape-rendering="crispEdges"><path d="M0 22 L0 6 L6 0 L57 0 L57 22 Z" fill="#fd9b48"/><path d="M7 1.5 L56 1.5" fill="none" stroke="#fdc79c" stroke-width="1"/><path d="M0.5 22 L0.5 6.5" fill="none" stroke="#fff" stroke-width="1"/><path d="M6 0.5 L56.5 0.5 L56.5 22" fill="none" stroke="#7a8a99" stroke-width="1"/><path d="M0.5 6.5 L6.5 0.5" fill="none" stroke="#7a8a99" stroke-width="1.2" shape-rendering="auto"/></svg><span>Event</span></div>
<div class="tab sel" style="left:317px;top:96px;width:61px"><svg width="61" height="22" shape-rendering="crispEdges"><path d="M0 22 L0 6 L6 0 L61 0 L61 22 Z" fill="#c64d2e"/><path d="M1.5 22 L1.5 7 M6.5 1.5 L60 1.5" fill="none" stroke="#fff" stroke-width="1"/><path d="M1.2 6.3 L6.3 1.2" fill="none" stroke="#fff" stroke-width="1.2" shape-rendering="auto"/><path d="M0.5 22 L0.5 6.5 M6 0.5 L60.5 0.5 L60.5 22" fill="none" stroke="#6382bf" stroke-width="1"/><path d="M0.5 6.5 L6.5 0.5" fill="none" stroke="#6382bf" stroke-width="1.2" shape-rendering="auto"/></svg><span>Dates</span></div>
<div class="tab" style="left:378px;top:96px;width:85px"><svg width="85" height="22" shape-rendering="crispEdges"><path d="M0 22 L0 6 L6 0 L85 0 L85 22 Z" fill="#fd9b48"/><path d="M7 1.5 L84 1.5" fill="none" stroke="#fdc79c" stroke-width="1"/><path d="M6 0.5 L84.5 0.5 L84.5 22" fill="none" stroke="#7a8a99" stroke-width="1"/><path d="M0.5 6.5 L6.5 0.5" fill="none" stroke="#7a8a99" stroke-width="1.2" shape-rendering="auto"/></svg><span style="left:4px">Schedules</span></div>
<div class="tab" style="left:463px;top:96px;width:76px"><svg width="76" height="22" shape-rendering="crispEdges"><path d="M0 22 L0 6 L6 0 L76 0 L76 22 Z" fill="#fd9b48"/><path d="M7 1.5 L75 1.5" fill="none" stroke="#fdc79c" stroke-width="1"/><path d="M0.5 22 L0.5 6.5" fill="none" stroke="#fff" stroke-width="1"/><path d="M6 0.5 L75.5 0.5 L75.5 22" fill="none" stroke="#7a8a99" stroke-width="1"/><path d="M0.5 6.5 L6.5 0.5" fill="none" stroke="#7a8a99" stroke-width="1.2" shape-rendering="auto"/></svg><span>Shipping</span></div>
<div class="tab" style="left:539px;top:96px;width:63px"><svg width="63" height="22" shape-rendering="crispEdges"><path d="M0 22 L0 6 L6 0 L63 0 L63 22 Z" fill="#fd9b48"/><path d="M7 1.5 L62 1.5" fill="none" stroke="#fdc79c" stroke-width="1"/><path d="M0.5 22 L0.5 6.5" fill="none" stroke="#fff" stroke-width="1"/><path d="M6 0.5 L62.5 0.5 L62.5 22" fill="none" stroke="#7a8a99" stroke-width="1"/><path d="M0.5 6.5 L6.5 0.5" fill="none" stroke="#7a8a99" stroke-width="1.2" shape-rendering="auto"/></svg><span>Return</span></div>
<div class="tab" style="left:602px;top:96px;width:75px"><svg width="75" height="22" shape-rendering="crispEdges"><path d="M0 22 L0 6 L6 0 L75 0 L75 22 Z" fill="#fd9b48"/><path d="M7 1.5 L74 1.5" fill="none" stroke="#fdc79c" stroke-width="1"/><path d="M0.5 22 L0.5 6.5" fill="none" stroke="#fff" stroke-width="1"/><path d="M6 0.5 L74.5 0.5 L74.5 22" fill="none" stroke="#7a8a99" stroke-width="1"/><path d="M0.5 6.5 L6.5 0.5" fill="none" stroke="#7a8a99" stroke-width="1.2" shape-rendering="auto"/></svg><span>Payment</span></div>
<div class="tab" style="left:677px;top:96px;width:67px"><svg width="67" height="22" shape-rendering="crispEdges"><path d="M0 22 L0 6 L6 0 L67 0 L67 22 Z" fill="#fd9b48"/><path d="M7 1.5 L66 1.5" fill="none" stroke="#fdc79c" stroke-width="1"/><path d="M0.5 22 L0.5 6.5" fill="none" stroke="#fff" stroke-width="1"/><path d="M6 0.5 L66.5 0.5 L66.5 22" fill="none" stroke="#7a8a99" stroke-width="1"/><path d="M0.5 6.5 L6.5 0.5" fill="none" stroke="#7a8a99" stroke-width="1.2" shape-rendering="auto"/></svg><span>Default</span></div>
<div class="tab" style="left:744px;top:96px;width:52px"><svg width="52" height="22" shape-rendering="crispEdges"><path d="M0 22 L0 6 L6 0 L52 0 L52 22 Z" fill="#fd9b48"/><path d="M7 1.5 L51 1.5" fill="none" stroke="#fdc79c" stroke-width="1"/><path d="M0.5 22 L0.5 6.5" fill="none" stroke="#fff" stroke-width="1"/><path d="M6 0.5 L51.5 0.5 L51.5 22" fill="none" stroke="#7a8a99" stroke-width="1"/><path d="M0.5 6.5 L6.5 0.5" fill="none" stroke="#7a8a99" stroke-width="1.2" shape-rendering="auto"/></svg><span>Cost</span></div>
<div class="tab" style="left:796px;top:96px;width:79px"><svg width="79" height="22" shape-rendering="crispEdges"><path d="M0 22 L0 6 L6 0 L79 0 L79 22 Z" fill="#fd9b48"/><path d="M7 1.5 L78 1.5" fill="none" stroke="#fdc79c" stroke-width="1"/><path d="M0.5 22 L0.5 6.5" fill="none" stroke="#fff" stroke-width="1"/><path d="M6 0.5 L78.5 0.5 L78.5 22" fill="none" stroke="#7a8a99" stroke-width="1"/><path d="M0.5 6.5 L6.5 0.5" fill="none" stroke="#7a8a99" stroke-width="1.2" shape-rendering="auto"/></svg><span>Sub Total</span></div>
<div class="tab" style="left:875px;top:96px;width:62px"><svg width="62" height="22" shape-rendering="crispEdges"><path d="M0 22 L0 6 L6 0 L62 0 L62 22 Z" fill="#fd9b48"/><path d="M7 1.5 L61 1.5" fill="none" stroke="#fdc79c" stroke-width="1"/><path d="M0.5 22 L0.5 6.5" fill="none" stroke="#fff" stroke-width="1"/><path d="M6 0.5 L61.5 0.5 L61.5 22" fill="none" stroke="#7a8a99" stroke-width="1"/><path d="M0.5 6.5 L6.5 0.5" fill="none" stroke="#7a8a99" stroke-width="1.2" shape-rendering="auto"/></svg><span>Status</span></div>
<div class="tab" style="left:937px;top:96px;width:106px"><svg width="106" height="22" shape-rendering="crispEdges"><path d="M0 22 L0 6 L6 0 L106 0 L106 22 Z" fill="#fd9b48"/><path d="M7 1.5 L105 1.5" fill="none" stroke="#fdc79c" stroke-width="1"/><path d="M0.5 22 L0.5 6.5" fill="none" stroke="#fff" stroke-width="1"/><path d="M6 0.5 L105.5 0.5 L105.5 22" fill="none" stroke="#7a8a99" stroke-width="1"/><path d="M0.5 6.5 L6.5 0.5" fill="none" stroke="#7a8a99" stroke-width="1.2" shape-rendering="auto"/></svg><span>Flat Discounts</span></div>
<div class="a" style="left:10px;top:118px;width:1168px;height:212px;background:#fff;border:1px solid #6382bf;border-right-color:#7a8a99;border-bottom-color:#7a8a99"></div>
<div class="a" style="left:11px;top:120px;width:1166px;height:209px;border-style:solid;border-color:#c8ddf2;border-width:2px 2px 2px 1px"></div>
<div class="a" style="left:318px;top:118px;width:59px;height:2px;background:#c8ddf2"></div>
<div class="a" style="left:12px;top:122px;width:1162px;height:204px;border:1px solid #b2b2b2"></div>
<div class="a" style="left:16px;top:130px;width:1030px;height:189px;border:2px solid #c00000"></div>
<div class="lbl " style="left:27px;top:164px">Charge Duration</div>
<div class="gbox" style="left:134px;top:154px;width:60px;height:35px;border-color:#6e6e6e"><div class="t" style="left:0px;top:9px;font-weight:bold;font-size:14px;line-height:16px;height:16px;color:#222;letter-spacing:0">0d</div></div>
<div class="a" style="left:214px;top:154px;width:99px;height:34px;border:1px solid #a6a6a6;background:#fff;text-align:center;line-height:34px;color:#222">Edit D<u>a</u>tes</div>
<div class="lbl " style="left:27px;top:225px">Charge Start</div>
<div class="fld" style="left:104px;top:219px;width:84px">05/06/2018</div><div class="dd" style="left:188px;top:219px"></div>
<div class="lbl " style="left:27px;top:260px">Charge End</div>
<div class="fld" style="left:104px;top:254px;width:84px">05/06/2018</div><div class="dd" style="left:188px;top:254px"></div>
<div class="lbl " style="left:377px;top:147px">Prep</div>
<div class="fld" style="left:454px;top:144px;width:84px">05/06/2018</div><div class="dd" style="left:538px;top:144px"></div>
<div class="fld" style="left:564px;top:144px;width:100px">09:00 AM</div>
<div class="lbl " style="left:377px;top:185px">Ship</div>
<div class="fld" style="left:454px;top:179px;width:84px">05/06/2018</div><div class="dd" style="left:538px;top:179px"></div>
<div class="fld" style="left:564px;top:179px;width:100px">09:00 AM</div>
<div class="lbl blue" style="left:377px;top:220px">Load In</div>
<div class="fld" style="left:454px;top:214px;width:84px"></div><div class="dd" style="left:538px;top:214px"></div>
<div class="fld" style="left:564px;top:214px;width:100px"></div>
<div class="lbl blue" style="left:377px;top:255px">Rehearsal</div>
<div class="fld" style="left:454px;top:249px;width:84px"></div><div class="dd" style="left:538px;top:249px"></div>
<div class="fld" style="left:564px;top:249px;width:100px"></div>
<div class="lbl blue" style="left:737px;top:150px">Show Start</div>
<div class="fld" style="left:814px;top:144px;width:84px"></div><div class="dd" style="left:898px;top:144px"></div>
<div class="fld" style="left:924px;top:144px;width:100px"></div>
<div class="lbl blue" style="left:737px;top:184px">Show End</div>
<div class="fld" style="left:814px;top:179px;width:84px"></div><div class="dd" style="left:898px;top:179px"></div>
<div class="fld" style="left:924px;top:179px;width:100px"></div>
<div class="lbl " style="left:737px;top:220px">Strike</div>
<div class="fld" style="left:814px;top:214px;width:84px"></div><div class="dd" style="left:898px;top:214px"></div>
<div class="fld" style="left:924px;top:214px;width:100px"></div>
<div class="lbl " style="left:737px;top:254px">Pickup</div>
<div class="fld" style="left:814px;top:249px;width:84px">05/06/2018</div><div class="dd" style="left:898px;top:249px"></div>
<div class="fld" style="left:924px;top:249px;width:100px">10:00 AM</div>
<div class="lbl " style="left:737px;top:290px">Return</div>
<div class="fld" style="left:814px;top:284px;width:84px">05/06/2018</div><div class="dd" style="left:898px;top:284px"></div>
<div class="fld" style="left:924px;top:284px;width:100px">10:00 AM</div>
<div class="tab sel" style="left:10px;top:334px;width:67px"><svg width="67" height="22" shape-rendering="crispEdges"><path d="M0 22 L0 6 L6 0 L67 0 L67 22 Z" fill="#c64d2e"/><path d="M1.5 22 L1.5 7 M6.5 1.5 L66 1.5" fill="none" stroke="#fff" stroke-width="1"/><path d="M1.2 6.3 L6.3 1.2" fill="none" stroke="#fff" stroke-width="1.2" shape-rendering="auto"/><path d="M0.5 22 L0.5 6.5 M6 0.5 L66.5 0.5 L66.5 22" fill="none" stroke="#6382bf" stroke-width="1"/><path d="M0.5 6.5 L6.5 0.5" fill="none" stroke="#6382bf" stroke-width="1.2" shape-rendering="auto"/></svg><span style="left:5px">Item(s)</span></div>
<div class="tab" style="left:77px;top:334px;width:58px"><svg width="58" height="22" shape-rendering="crispEdges"><path d="M0 22 L0 6 L6 0 L58 0 L58 22 Z" fill="#fd9b48"/><path d="M7 1.5 L57 1.5" fill="none" stroke="#fdc79c" stroke-width="1"/><path d="M6 0.5 L57.5 0.5 L57.5 22" fill="none" stroke="#7a8a99" stroke-width="1"/><path d="M0.5 6.5 L6.5 0.5" fill="none" stroke="#7a8a99" stroke-width="1.2" shape-rendering="auto"/></svg><span style="left:4px">Labor</span></div>
<div class="a" style="left:8px;top:356px;width:1172px;height:303px;background:#fff;border:1px solid #6382bf;border-right-color:#7a8a99;border-bottom-color:#7a8a99"></div>
<div class="a" style="left:9px;top:358px;width:1170px;height:300px;border-style:solid;border-color:#c8ddf2;border-width:2px 2px 2px 1px"></div>
<div class="a" style="left:11px;top:356px;width:65px;height:2px;background:#c8ddf2"></div>
<div class="a" style="left:10px;top:360px;width:1166px;height:34px;border:1px solid #b2b2b2"></div>
<div class="a" style="left:10px;top:395px;width:1166px;height:260px;border:1px solid #b2b2b2"></div>
<div class="lbl " style="left:45px;top:369px">Search :</div>
<div class="lbl " style="left:120px;top:369px">Asset</div>
<div class="a" style="left:162px;top:365px;width:120px;height:24px;border:1px solid #111;background:#fff"></div>
<div class="lbl " style="left:362px;top:369px">Product</div>
<div class="a" style="left:412px;top:365px;width:195px;height:24px;border:1px solid #111;background:#fff"></div>
<div class="lbl " style="left:625px;top:369px">Qty</div>
<div class="a" style="left:647px;top:365px;width:40px;height:24px;border:1px solid #111;background:#fff;line-height:25px;padding-left:1px">1</div>
<div class="cb cbp" style="left:707px;top:371px;width:12px;height:12px"></div>
<div class="lbl " style="left:724px;top:371px">Update existing lines</div>
<div class="a" style="left:12px;top:397px;width:1162px;height:256px;border:1px solid #7a8a99"></div>
<div class="a" style="left:13px;top:398px;width:1160px;height:237px;overflow:hidden">
<div class="a" style="left:0;top:0;width:1165px;height:20px;background:#ff6b35"></div>
<div class="hc" style="left:0px;width:14px">T</div>
<div class="hc" style="left:15px;width:14px">C</div>
<div class="hc" style="left:30px;width:14px">X</div>
<div class="hc" style="left:45px;width:14px">M</div>
<div class="hc" style="left:60px;width:14px">S</div>
<div class="hc" style="left:75px;width:19px">I.C</div>
<div class="hc" style="left:95px;width:19px">I....</div>
<div class="hc" style="left:115px;width:19px">I.I</div>
<div class="hc" style="left:135px;width:74px">Status</div>
<div class="hc" style="left:210px;width:19px">L</div>
<div class="hc" style="left:230px;width:44px">Action</div>
<div class="hc" style="left:275px;width:99px">Product ID</div>
<div class="hc" style="left:375px;width:116px">Description</div>
<div class="hc" style="left:492px;width:54px">Duration</div>
<div class="hc" style="left:547px;width:29px">Qty</div>
<div class="hc" style="left:577px;width:99px">Shipping Site</div>
<div class="hc" style="left:677px;width:99px">Returning Site</div>
<div class="hc" style="left:777px;width:39px">Unit</div>
<div class="hc" style="left:817px;width:89px">Day/Each Price</div>
<div class="hc" style="left:907px;width:69px">Week Price</div>
<div class="hc" style="left:977px;width:69px">Month Price</div>
<div class="hc" style="left:1047px;width:54px">Discount</div>
<div class="hc" style="left:1102px;width:59px">Net Each</div>
<div class="row" style="top:20px;background:#fd9b48"><div class="cell" style="left:0px;width:15px;"><div class="cb cbs" style="left:1px;top:3px"></div><svg class="a" style="left:1px;top:2px" width="13" height="13"><path d="M3.2 6.2 L4.6 9.6 L10.2 3.6" stroke="#1a1a1a" stroke-width="1.7" fill="none"/></svg></div><div class="cell" style="left:15px;width:15px;"><div class="cb cbs" style="left:1px;top:3px"></div></div><div class="cell" style="left:30px;width:15px;"><div class="cb cbs" style="left:1px;top:3px"></div></div><div class="cell" style="left:45px;width:15px;"><div class="cb cbs" style="left:1px;top:3px"></div></div><div class="cell" style="left:60px;width:15px;"><div class="cb cbs" style="left:1px;top:3px"></div></div><div class="cell" style="left:75px;width:20px;"><div class="cb cbs" style="left:3px;top:3px"></div></div><div class="cell" style="left:95px;width:20px;"><div class="cb cbs" style="left:3px;top:3px"></div></div><div class="cell" style="left:115px;width:20px;"><div class="cb cbs" style="left:3px;top:3px"></div></div><div class="cell" style="left:135px;width:75px;padding-left:1px;">Reserved</div><div class="cell" style="left:210px;width:20px;"><div class="cb cbs" style="left:3px;top:3px"></div></div><div class="cell" style="left:230px;width:45px;padding-left:1px;">Rent</div><div class="cell" style="left:275px;width:100px;padding-left:1px;">LGQ6</div><div class="cell" style="left:375px;width:117px;padding-left:8px;">LGQ6</div><div class="cell" style="left:492px;width:55px;padding-left:1px;">0d</div><div class="cell" style="left:547px;width:30px;text-align:right;padding-right:2px;">4</div><div class="cell" style="left:577px;width:100px;padding-left:1px;">BUDAPEST</div><div class="cell" style="left:677px;width:100px;padding-left:1px;">PARIS</div><div class="cell" style="left:777px;width:40px;padding-left:1px;">Day</div><div class="cell" style="left:817px;width:90px;text-align:right;padding-right:2px;">0.00</div><div class="cell" style="left:907px;width:70px;text-align:right;padding-right:2px;">0.00</div><div class="cell" style="left:977px;width:70px;text-align:right;padding-right:2px;">0.00</div><div class="cell" style="left:1047px;width:55px;text-align:right;padding-right:2px;">0.00</div><div class="cell" style="left:1102px;width:60px;text-align:right;padding-right:2px;">0.00</div></div>
<div class="row" style="top:39px;background:#ffffff"><div class="cell" style="left:0px;width:15px;"><div class="cb" style="left:1px;top:3px"></div><svg class="a" style="left:1px;top:2px" width="13" height="13"><path d="M3.2 6.2 L4.6 9.6 L10.2 3.6" stroke="#1a1a1a" stroke-width="1.7" fill="none"/></svg></div><div class="cell" style="left:15px;width:15px;"><div class="cb" style="left:1px;top:3px"></div></div><div class="cell" style="left:30px;width:15px;"><div class="cb" style="left:1px;top:3px"></div></div><div class="cell" style="left:45px;width:15px;"><div class="cb" style="left:1px;top:3px"></div></div><div class="cell" style="left:60px;width:15px;"><div class="cb" style="left:1px;top:3px"></div></div><div class="cell" style="left:75px;width:20px;"><div class="cb" style="left:3px;top:3px"></div></div><div class="cell" style="left:95px;width:20px;"><div class="cb" style="left:3px;top:3px"></div></div><div class="cell" style="left:115px;width:20px;"><div class="cb" style="left:3px;top:3px"></div></div><div class="cell" style="left:135px;width:75px;padding-left:1px;">Reserved</div><div class="cell" style="left:210px;width:20px;"><div class="cb" style="left:3px;top:3px"></div></div><div class="cell" style="left:230px;width:45px;padding-left:1px;">Rent</div><div class="cell" style="left:275px;width:100px;padding-left:1px;">LGQ6</div><div class="cell" style="left:375px;width:117px;padding-left:8px;">LGQ6</div><div class="cell" style="left:492px;width:55px;padding-left:1px;">0d</div><div class="cell" style="left:547px;width:30px;text-align:right;padding-right:2px;">5</div><div class="cell" style="left:577px;width:100px;padding-left:1px;">BERLIN</div><div class="cell" style="left:677px;width:100px;padding-left:1px;">PARIS</div><div class="cell" style="left:777px;width:40px;padding-left:1px;">Day</div><div class="cell" style="left:817px;width:90px;text-align:right;padding-right:2px;">0.00</div><div class="cell" style="left:907px;width:70px;text-align:right;padding-right:2px;">0.00</div><div class="cell" style="left:977px;width:70px;text-align:right;padding-right:2px;">0.00</div><div class="cell" style="left:1047px;width:55px;text-align:right;padding-right:2px;">0.00</div><div class="cell" style="left:1102px;width:60px;text-align:right;padding-right:2px;">0.00</div></div>
</div>
<div class="a" style="left:13px;top:635px;width:1160px;height:16px;background:#eeeeee;border-top:1px solid #7a8a99;border-bottom:1px solid #7a8a99;box-shadow:inset 0 1px 0 #c4d4e4"></div>
<div class="a" style="left:13px;top:651px;width:1160px;height:1px;background:#c4d4e4"></div>
<div class="a" style="left:13px;top:636px;width:15px;height:14px;background:#eeeeee;box-shadow:inset 1px 1px 0 #fff"></div>
<svg class="a" style="left:19px;top:640px" width="4" height="8"><path d="M4 0 L4 8 L0 4 Z" fill="#1a1a1a"/></svg>
<div class="a" style="left:1156px;top:636px;width:16px;height:14px;background:#eeeeee;border-left:1px solid #7a8a99;box-shadow:inset 1px 1px 0 #fff"></div>
<svg class="a" style="left:1162px;top:640px" width="4" height="8"><path d="M0 0 L0 8 L4 4 Z" fill="#1a1a1a"/></svg>
<div class="a" style="left:28px;top:635px;width:542px;height:16px;background:linear-gradient(#e49450 0,#e49450 7%,#f2c4a2 8%,#ecb288 50%,#e9a26c 92%,#e8a888 100%);border:1px solid #ffc000"></div>
<div class="a" style="left:297px;top:639px;width:1px;height:10px;background:#8c7c98"></div><div class="a" style="left:298px;top:640px;width:1px;height:9px;background:#f8dcc8"></div>
<div class="a" style="left:299.5px;top:639px;width:1px;height:10px;background:#8c7c98"></div><div class="a" style="left:300.5px;top:640px;width:1px;height:9px;background:#f8dcc8"></div>
<div class="a" style="left:302px;top:639px;width:1px;height:10px;background:#8c7c98"></div><div class="a" style="left:303px;top:640px;width:1px;height:9px;background:#f8dcc8"></div>
<div class="a" style="left:8px;top:657px;width:1172px;height:1px;background:#c9c9c9"></div>
<div class="lbl" style="left:70px;top:666px;font-weight:bold;font-size:14px;line-height:16px;color:#222">Items</div>
<div class="gbox" style="left:120px;top:661px;width:100px;height:24px"></div>
<div class="lbl" style="left:235px;top:666px;font-weight:bold;font-size:14px;line-height:16px;color:#222">Labor</div>
<div class="gbox" style="left:287px;top:661px;width:100px;height:24px"></div>
<div class="lbl" style="left:446px;top:666px;font-weight:bold;font-size:14px;line-height:16px;color:#222">Sub Total</div>
<div class="gbox" style="left:525px;top:661px;width:100px;height:24px"></div>
<div class="lbl" style="left:636px;top:666px;font-weight:bold;font-size:14px;line-height:16px;color:#222">Tax</div>
<div class="gbox" style="left:670px;top:661px;width:100px;height:24px"></div>
<div class="a" style="left:813px;top:661px;width:88px;height:24px;border:1px solid #b5b5b5;background:#fff;text-align:center;font-weight:bold;font-size:14px;line-height:24px;color:#222;padding-left:3px">Total</div>
<div class="gbox" style="left:906px;top:661px;width:100px;height:24px"><div class="t" style="left:1px;top:3px;font-weight:bold;font-size:14px;line-height:16px;height:16px;color:#111">0.00</div></div>
<div class="a" style="left:8px;top:694px;width:1172px;height:1px;background:#c8c8c8"></div>
<div class="a" style="left:8px;top:695px;width:1171px;height:24px;border:1px solid #a2a2a2;border-top:1px solid #808080;border-bottom-color:#c4c4c4;background:#fff"></div>
<div class="a" style="left:8px;top:719px;width:1172px;height:1px;background:#f4f4f4"></div>
</body></html>
